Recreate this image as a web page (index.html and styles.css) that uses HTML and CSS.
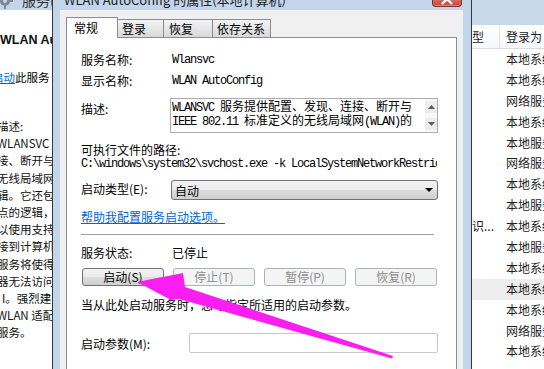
FILE: index.html
```html
<!DOCTYPE html>
<html lang="zh-CN">
<head>
    <meta charset="UTF-8">
    <meta name="viewport" content="width=device-width, initial-scale=1.0">
    <title>WLAN AutoConfig 的属性(本地计算机)</title>
    <link rel="stylesheet" href="styles.css">
</head>
<body>
<div class="screen">

    <!-- services console, left part (covered by the dialog) -->
    <div class="console-left">
        <div class="console-top">
            <svg class="gear" width="16" height="14" viewBox="0 0 16 14">
                <circle cx="7" cy="6" r="5" fill="#7d8894"/>
                <circle cx="7" cy="6" r="2" fill="#c4d5e9"/>
                <rect x="12" y="5" width="3" height="2" fill="#7d8894"/>
                <rect x="6" y="11" width="2" height="3" fill="#7d8894"/>
            </svg>
            <span class="console-title">服务(本地)</span>
        </div>
        <div class="svc-name">WLAN AutoConfig</div>
        <div class="svc-start"><span class="link">启动</span>此服务</div>
        <div class="svc-desc">
            <div class="ln">描述:</div>
            <div class="ln">WLANSVC</div>
            <div class="ln">接、断开与</div>
            <div class="ln">无线局域网</div>
            <div class="ln">辑。它还包</div>
            <div class="ln">点的逻辑，</div>
            <div class="ln">以使用支持</div>
            <div class="ln">接到计算机</div>
            <div class="ln">服务将使得</div>
            <div class="ln">器无法访问</div>
            <div class="ln ln-i">I。强烈建</div>
            <div class="ln">WLAN 适配</div>
            <div class="ln">服务。</div>
        </div>
    </div>

    <!-- properties dialog -->
    <div class="dialog">
        <div class="dlg-title">
            <span class="title">WLAN AutoConfig 的属性(本地计算机)</span>
            <span class="close">
                <svg width="28" height="6" viewBox="0 0 28 6">
                    <path d="M9 -6 L19 4 M19 -6 L9 4" stroke="#fff" stroke-width="2.4"/>
                </svg>
            </span>
        </div>
        <div class="dlg-body">
            <div class="client">
                <div class="tabs">
                    <div class="tab active">常规</div>
                    <div class="tab t-login">登录</div>
                    <div class="tab t-recover">恢复</div>
                    <div class="tab t-dep">依存关系</div>
                </div>
                <div class="panel">
                    <div class="row r-line">
                        <span class="lbl w91">服务名称:</span>
                        <span class="mono">Wlansvc</span>
                    </div>
                    <div class="row r-line r-disp">
                        <span class="lbl w91">显示名称:</span>
                        <span class="mono">WLAN AutoConfig</span>
                    </div>
                    <div class="row r-desc">
                        <span class="lbl w89 lbl-top">描述:</span>
                        <div class="descbox">
                            <div class="desctext">
                                <div><span class="mono">WLANSVC </span>服务提供配置、发现、连接、断开与</div>
                                <div><span class="mono">IEEE 802.11 </span>标准定义的无线局域网<span class="mono">(WLAN)</span>的</div>
                            </div>
                            <div class="vscroll">
                                <span class="sbtn"><svg width="7" height="4" viewBox="0 0 7 4"><path d="M0 4 L3.5 0 L7 4 Z" fill="#5a5a5a"/></svg></span>
                                <span class="sbtn"><svg width="7" height="4" viewBox="0 0 7 4"><path d="M0 0 L7 0 L3.5 4 Z" fill="#5a5a5a"/></svg></span>
                            </div>
                        </div>
                    </div>
                    <div class="path-lbl">可执行文件的路径:</div>
                    <div class="path mono">C:\windows\system32\svchost.exe -k LocalSystemNetworkRestricted</div>
                    <div class="row r-type">
                        <span class="lbl w90 lbl-top">启动类型(E):</span>
                        <div class="combo">
                            <span>自动</span>
                            <svg width="8" height="4" viewBox="0 0 8 4"><path d="M0 0 L8 0 L4 4 Z" fill="#000"/></svg>
                        </div>
                    </div>
                    <div class="help"><span class="link">帮助我配置服务启动选项。</span></div>
                    <div class="sep"></div>
                    <div class="row r-status">
                        <span class="lbl w91">服务状态:</span>
                        <span>已停止</span>
                    </div>
                    <div class="buttons">
                        <span class="btn">启动(S)</span>
                        <span class="btn disabled">停止(T)</span>
                        <span class="btn disabled">暂停(P)</span>
                        <span class="btn disabled">恢复(R)</span>
                    </div>
                    <div class="note">当从此处启动服务时，您可指定所适用的启动参数。</div>
                    <div class="row r-param">
                        <span class="lbl w108">启动参数(M):</span>
                        <div class="edit"></div>
                    </div>
                </div>
            </div>
        </div>
    </div>

    <!-- services console, right part -->
    <div class="console-right">
        <div class="cr-top"></div>
        <div class="cr-head">
            <span class="c1">型</span>
            <span class="c2">登录为</span>
        </div>
        <div class="cr-row"><span class="c1"></span><span class="c2">本地系统</span></div>
        <div class="cr-row"><span class="c1"></span><span class="c2">本地系统</span></div>
        <div class="cr-row"><span class="c1"></span><span class="c2">网络服务</span></div>
        <div class="cr-row"><span class="c1"></span><span class="c2">本地系统</span></div>
        <div class="cr-row"><span class="c1"></span><span class="c2">本地服务</span></div>
        <div class="cr-row"><span class="c1"></span><span class="c2">网络服务</span></div>
        <div class="cr-row"><span class="c1"></span><span class="c2">本地系统</span></div>
        <div class="cr-row"><span class="c1"></span><span class="c2">本地服务</span></div>
        <div class="cr-row"><span class="c1">识...</span><span class="c2">本地系统</span></div>
        <div class="cr-row"><span class="c1"></span><span class="c2">本地服务</span></div>
        <div class="cr-row"><span class="c1"></span><span class="c2">本地系统</span></div>
        <div class="cr-row hover"><span class="c1"></span><span class="c2">本地系统</span></div>
        <div class="cr-row"><span class="c1"></span><span class="c2">本地系统</span></div>
        <div class="cr-row"><span class="c1"></span><span class="c2">网络服务</span></div>
        <div class="cr-row"><span class="c1"></span><span class="c2">本地系统</span></div>
    </div>

    <!-- magenta annotation arrow -->
    <svg class="arrow" width="544" height="369" viewBox="0 0 544 369">
        <polygon points="137,282 183,273 185,287 393,356 392,358.5 179,299 171,300" fill="#fa1ef0"/>
    </svg>
</div>
</body>
</html>
```

FILE: styles.css
```css
body{
    margin: 0;
    font-family: "Noto Sans CJK SC", "Noto Sans", sans-serif;
    font-size: 12px;
    color: #000;
}
.screen{
    position: relative;
    display: flex;
    width: 544px;
    height: 369px;
    overflow: hidden;
    background: #fff;
}

/* left console */
.console-left{
    flex: none;
    width: 52px;
    overflow: hidden;
    white-space: nowrap;
    background: #fff;
}
.console-top{
    display: flex;
    height: 10px;
    overflow: hidden;
    background: #c4d5e9;
}
.gear{
    flex: none;
    margin: -5px 0 0 -2px;
}
.console-title{
    margin: -7px 0 0 8px;
    font-size: 14px;
    line-height: 14px;
    color: #333;
}
.svc-name{
    margin-top: 22px;
    font: bold 12.5px/16px "Liberation Sans", sans-serif;
    color: #111;
}
.svc-start{
    margin: 21px 0 0 -8px;
    font-size: 11.5px;
    line-height: 16px;
}
.link{
    color: #0066cc;
    text-decoration: underline;
}
.svc-desc{
    margin-top: 33px;
    font-size: 11.5px;
    line-height: 17.2px;
    color: #111;
}
.svc-desc .ln{
    margin-left: -3px;
}
.svc-desc .ln-i{
    margin-left: 2px;
}

/* dialog */
.dialog{
    flex: none;
    display: flex;
    flex-direction: column;
    width: 418px;
    border-left: 1px solid #2f3a45;
    border-right: 1px solid #2f3a45;
    background: #c2d5eb;
}
.dlg-title{
    flex: none;
    display: flex;
    justify-content: space-between;
    height: 10px;
    padding: 0 9px 0 11px;
    overflow: hidden;
}
.dlg-title .title{
    margin-top: -7px;
    font-size: 13px;
    line-height: 14px;
    color: #1e1e1e;
    white-space: nowrap;
}
.close{
    flex: none;
    width: 30px;
    height: 7px;
    box-sizing: border-box;
    border: 1px solid #7b3226;
    border-top: none;
    border-radius: 0 0 4px 4px;
    background: linear-gradient(#d26a5c, #c0473a);
    box-shadow: inset 0 -1px 0 rgba(255,255,255,.35);
}
.close svg{
    display: block;
}
.dlg-body{
    flex: 1;
    min-height: 0;
    padding: 0 8px 0 7px;
}
.client{
    height: 100%;
    box-sizing: border-box;
    padding: 7px 6px 0;
    background: #f0f0f0;
}

/* tabs */
.tabs{
    display: flex;
    align-items: flex-end;
    height: 20px;
}
.tab{
    box-sizing: border-box;
    height: 18px;
    margin-left: -1px;
    border: 1px solid #898c95;
    border-bottom: none;
    background: linear-gradient(#f4f4f4, #e6e6e6 50%, #d9d9d9);
    line-height: 17px;
}
.tab.active{
    position: relative;
    z-index: 1;
    width: 52px;
    height: 21px;
    margin: 0 0 -1px 0;
    padding-left: 7px;
    background: #fff;
    line-height: 20px;
}
.t-login{ width: 47px; padding-left: 4px; }
.t-recover{ width: 50px; padding-left: 5px; }
.t-dep{ width: 59px; padding-left: 4px; }

.panel{
    height: 332px;
    box-sizing: border-box;
    padding: 13px 0 0 14px;
    border: 1px solid #898c95;
    border-bottom: none;
    background: #fff;
}
.row{
    display: flex;
    align-items: center;
}
.lbl{
    flex: none;
}
.lbl-top{
    align-self: flex-start;
}
.w89{ width: 89px; }
.w90{ width: 90px; }
.w91{ width: 91px; }
.w108{ width: 108px; }

.mono{
    font-family: "Liberation Mono", "DejaVu Sans Mono", monospace;
    font-size: 12px;
    letter-spacing: -1.2px;
}
.r-line{
    height: 18px;
    line-height: 18px;
}
.r-disp{
    margin-top: 3px;
}
.r-desc{
    margin-top: 8px;
    align-items: flex-start;
}
.r-desc .lbl{
    margin-top: 2px;
    line-height: 18px;
}
.descbox{
    display: flex;
    width: 268px;
    height: 35px;
    box-sizing: border-box;
    border: 1px solid #abadb3;
}
.desctext{
    flex: 1;
    padding: 1px 0 0 1px;
    line-height: 12px;
    white-space: nowrap;
    overflow: hidden;
}
.vscroll{
    display: flex;
    flex-direction: column;
    justify-content: space-between;
    width: 12px;
    padding: 2px 0;
    background: #f7f7f7;
}
.sbtn{
    display: flex;
    align-items: center;
    justify-content: center;
    height: 12px;
    background: #ededed;
}
.path-lbl{
    margin-top: 10px;
    line-height: 14px;
}
.path{
    width: 356px;
    overflow: hidden;
    white-space: nowrap;
    line-height: 14px;
}
.r-type{
    margin-top: 9px;
}
.r-type .lbl{
    line-height: 18px;
}
.combo{
    display: flex;
    align-items: center;
    justify-content: space-between;
    width: 267px;
    height: 20px;
    box-sizing: border-box;
    padding: 0 4px 0 3px;
    border: 1px solid #707070;
    border-radius: 3px;
    background: linear-gradient(#f2f2f2, #ebebeb 50%, #dddddd 50%, #cfcfcf);
}
.help{
    margin-top: 9px;
    line-height: 16px;
}
.sep{
    width: 353px;
    height: 1px;
    margin-top: 9px;
    background: #a0a0a0;
}
.r-status{
    margin-top: 10px;
    line-height: 16px;
}
.buttons{
    display: flex;
    gap: 9px;
    margin: 7px 0 0 1px;
}
.btn{
    width: 82px;
    height: 18px;
    box-sizing: border-box;
    border: 1px solid #707070;
    border-radius: 3px;
    background: linear-gradient(#f2f2f2, #ebebeb 50%, #dddddd 50%, #cfcfcf);
    text-align: center;
    line-height: 16px;
}
.btn.disabled{
    border-color: #adb2b5;
    background: #f4f4f4;
    color: #8d8d8d;
}
.note{
    margin-top: 11px;
    line-height: 16px;
}
.r-param{
    margin-top: 20px;
}
.edit{
    width: 249px;
    height: 20px;
    box-sizing: border-box;
    border: 1px solid #c5c8cd;
    border-radius: 2px;
}

/* right console */
.console-right{
    flex: 1;
    overflow: hidden;
    white-space: nowrap;
    background: #fff;
    color: #1e1e1e;
}
.cr-top{
    height: 25px;
    background: #c7d8eb;
}
.cr-head{
    display: flex;
    height: 23px;
    line-height: 23px;
    border-bottom: 1px solid #dcdcdc;
    background: linear-gradient(#fff, #f5f7fa);
}
.cr-head .c1{
    width: 27px;
    border-right: 1px solid #e3e3e3;
}
.cr-head .c2,
.cr-row .c2{
    padding-left: 6px;
}
.cr-row{
    display: flex;
    height: 20.9px;
    line-height: 20.9px;
}
.cr-row .c1{
    flex: none;
    width: 28px;
    overflow: hidden;
}
.cr-row.hover{
    background: #ededed;
}

/* annotation */
.arrow{
    position: absolute;
    left: 0;
    top: 0;
    pointer-events: none;
}
```
